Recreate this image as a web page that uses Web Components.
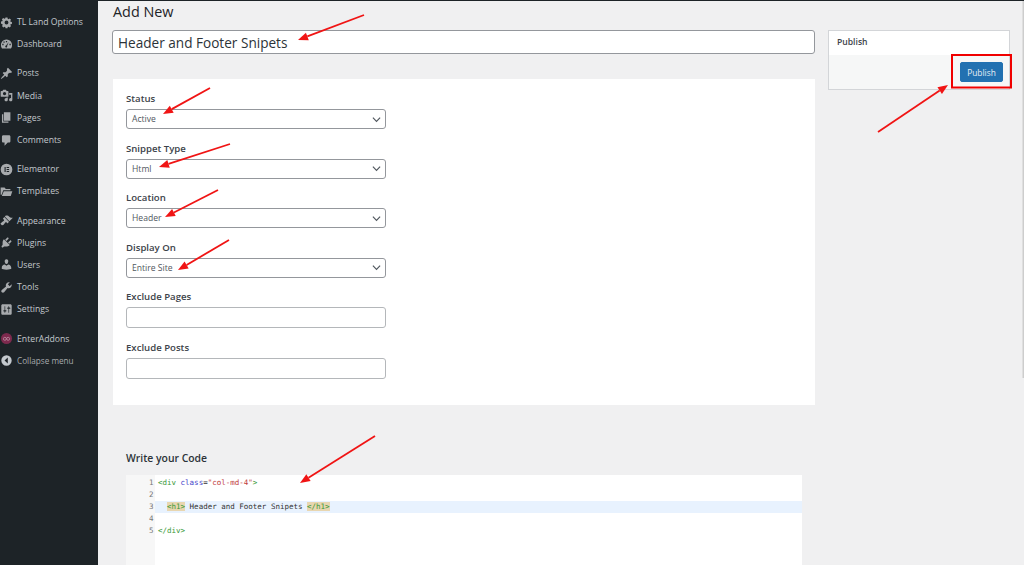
<!DOCTYPE html>
<html>
<head>
<meta charset="utf-8">
<title>Add New</title>
<style>
  html, body { margin: 0; height: 100%; overflow: hidden; }
  body { font-family: "Open Sans", "Noto Sans", sans-serif; background: #f0f0f1; }
</style>
</head>
<body>
<wp-admin>
  <admin-menu slot="menu">
    <menu-item icon="gear">TL Land Options</menu-item>
    <menu-item icon="gauge">Dashboard</menu-item>
    <menu-item icon="pin" class="gap">Posts</menu-item>
    <menu-item icon="media">Media</menu-item>
    <menu-item icon="pages">Pages</menu-item>
    <menu-item icon="comment">Comments</menu-item>
    <menu-item icon="elementor" class="gap">Elementor</menu-item>
    <menu-item icon="folder">Templates</menu-item>
    <menu-item icon="brush" class="gap">Appearance</menu-item>
    <menu-item icon="plug">Plugins</menu-item>
    <menu-item icon="user">Users</menu-item>
    <menu-item icon="wrench">Tools</menu-item>
    <menu-item icon="sliders">Settings</menu-item>
    <menu-item icon="addons" class="gap">EnterAddons</menu-item>
    <menu-item icon="collapse" class="dim">Collapse menu</menu-item>
  </admin-menu>

  <page-title>Add New</page-title>
  <title-input value="Header and Footer Snipets"></title-input>

  <form-card>
    <form-field label="Status" value="Active" type="select"></form-field>
    <form-field label="Snippet Type" value="Html" type="select"></form-field>
    <form-field label="Location" value="Header" type="select"></form-field>
    <form-field label="Display On" value="Entire Site" type="select"></form-field>
    <form-field label="Exclude Pages" type="text"></form-field>
    <form-field label="Exclude Posts" type="text"></form-field>
  </form-card>

  <code-editor heading="Write your Code"></code-editor>

  <publish-box slot="side"></publish-box>
  <red-arrows slot="overlay"></red-arrows>
</wp-admin>

<script>
// admin menu glyphs, 20x20 box
const ICONS = {
  gear: '<path fill-rule="evenodd" transform="translate(1.5 1.5) scale(.85)" d="M8.2 1h3.600l.4 2.400 1.500.6 2-1.400 2.500 2.500-1.400 2 .6 1.500 2.400.4v3.600l-2.400.4-.6 1.500 1.400 2-2.500 2.500-2-1.400-1.500.6-.4 2.400H8.200l-.4-2.400-1.500-.6-2 1.400-2.500-2.500 1.400-2-.6-1.500L0 11.800V8.200l2.400-.4.6-1.500-1.400-2 2.500-2.500 2 1.400 1.500-.6zM10 6.500a3.500 3.500 0 1 0 0 7 3.500 3.500 0 0 0 0-7z"/>',
  gauge: '<path fill-rule="evenodd" d="M10 2.500a8.500 8.500 0 0 0-7.400 12.700c.3.5.8.8 1.400.8h12c.6 0 1.100-.3 1.400-.8A8.500 8.500 0 0 0 10 2.500zM9 4.500h2v2H9zM4.800 6.300l1.400-1.400 1.400 1.400-1.400 1.400zM3.500 11v-2h2v2zm11 0v-2h2v2zM9 14.500a1.500 1.500 0 0 1 .3-2.900L13.500 6l-2.600 6.400A1.500 1.500 0 0 1 9 14.500z"/>',
  pin: '<path d="M10.440 3.020l1.820-1.820 6.360 6.350-1.830 1.820c-1.050-.68-2.480-.57-3.410.36l-.75.75c-.92.93-1.040 2.350-.35 3.410l-1.830 1.820-2.410-2.410-2.800 2.790c-.42.42-3.380 2.710-3.800 2.290s1.860-3.390 2.280-3.810l2.790-2.790L4.100 9.360l1.830-1.820c1.050.69 2.480.57 3.400-.36l.75-.75c.93-.92 1.050-2.350.36-3.410z"/>',
  media: '<path fill-rule="evenodd" d="M13 11V4c0-.55-.45-1-1-1h-1.670L9 1H5L3.670 3H2c-.55 0-1 .45-1 1v7c0 .55.45 1 1 1h10c.55 0 1-.45 1-1zM7 4.500c1.380 0 2.500 1.120 2.500 2.500S8.380 9.500 7 9.500 4.500 8.380 4.500 7 5.620 4.500 7 4.500zM14 6h5v10.500c0 1.380-1.120 2.500-2.500 2.500S14 17.880 14 16.500s1.120-2.500 2.500-2.500c.17 0 .34.02.5.05V9h-3V6zm-4 8.050V13h2v3.500c0 1.380-1.120 2.500-2.500 2.500S7 17.880 7 16.500 8.120 14 9.500 14c.17 0 .34.02.5.05z"/>',
  pages: '<path d="M6 15V2h10v13H6zm-1 1h8v2H3V5h2v11z"/>',
  comment: '<path d="M5 2h9c1.100 0 2 .9 2 2v7c0 1.100-.9 2-2 2h-2l-5 5v-5H5c-1.100 0-2-.9-2-2V4c0-1.100.9-2 2-2z"/>',
  elementor: '<path fill-rule="evenodd" d="M10 1a9 9 0 1 0 0 18 9 9 0 0 0 0-18zM7 6h1.700v8H7zm3.200 0H14v1.600h-3.800zm0 3.200H14v1.600h-3.800zm0 3.200H14V14h-3.800z"/>',
  folder: '<path d="M1 4h6l2 2h7v2H5L2.500 15 1 15zM5.800 9.500H19L16.500 17H2.800z"/>',
  brush: '<path d="M14.480 11.060L7.410 3.990l1.500-1.500c.5-.56 2.300-.47 3.510.32 1.210.8 1.430 1.280 2.910 2.100 1.180.64 2.450 1.260 4.450.85zm-.71.71L6.700 4.700 4.930 6.470c-.39.39-.39 1.020 0 1.410l1.060 1.060c.39.39.39 1.030 0 1.420-.6.6-1.430 1.110-2.210 1.690-.35.26-.7.53-1.010.84C1.430 13.230.4 14.750 1.010 15.500l.04.05 1.410 1.410c.91.91 2.490.08 3.450-.87.31-.31.58-.66.84-1.010.58-.78 1.090-1.610 1.690-2.210.39-.39 1.030-.39 1.420 0l1.060 1.060c.39.39 1.020.39 1.410 0z"/>',
  plug: '<path d="M13.110 4.360L9.870 7.600 8 5.730l3.240-3.240c.35-.34 1.050-.2 1.560.32.52.51.66 1.210.31 1.550zm-8 1.770l.91-1.120 9.010 9.010-1.190.84c-.71.71-2.630 1.160-3.820 1.160H6.140L4.900 17.260c-.59.59-1.540.59-2.120 0-.59-.58-.59-1.530 0-2.120l1.240-1.240v-3.880c0-1.130.4-3.190 1.090-3.890zm7.260 3.970l3.240-3.240c.34-.35 1.040-.21 1.550.31.52.51.66 1.210.31 1.550l-3.240 3.250z"/>',
  user: '<path d="M10 9.250c-2.270 0-2.730-3.440-2.730-3.440C7 4.020 7.820 2 9.970 2c2.160 0 2.980 2.020 2.710 3.810 0 0-.41 3.440-2.680 3.440zm0 2.570L12.720 10c2.390 0 4.520 2.330 4.520 4.530v2.490s-3.650 1.130-7.240 1.130c-3.650 0-7.240-1.130-7.240-1.130v-2.490c0-2.250 1.940-4.480 4.470-4.480z"/>',
  wrench: '<path fill-rule="evenodd" d="M16.680 9.770c-1.340 1.340-3.300 1.670-4.950.99l-5.410 6.520c-.99.99-2.590.99-3.580 0s-.99-2.590 0-3.570l6.520-5.420c-.68-1.650-.35-3.610.99-4.950 1.280-1.280 3.120-1.620 4.720-1.060l-2.890 2.890 2.820 2.820 2.860-2.870c.53 1.580.18 3.390-1.080 4.650z"/>',
  sliders: '<path fill-rule="evenodd" d="M18 16V4c0-1.100-.9-2-2-2H4c-1.100 0-2 .9-2 2v12c0 1.100.9 2 2 2h12c1.100 0 2-.9 2-2zM8 11h1c.55 0 1 .45 1 1s-.45 1-1 1H8v1.500c0 .28-.22.5-.5.5s-.5-.22-.5-.5V13H6c-.55 0-1-.45-1-1s.45-1 1-1h1V5.500c0-.28.22-.5.5-.5s.5.22.5.5V11zm5-2h-1c-.55 0-1-.45-1-1s.45-1 1-1h1V5.500c0-.28.22-.5.5-.5s.5.22.5.5V7h1c.55 0 1 .45 1 1s-.45 1-1 1h-1v5.500c0 .28-.22.5-.5.5s-.5-.22-.5-.5V9z"/>',
  collapse: '<path fill-rule="evenodd" d="M10 2a8 8 0 1 1 0 16 8 8 0 0 1 0-16zm2 3.500L7 10l5 4.500z"/>',
  addons: '<circle cx="10" cy="10" r="8.500" fill="#7d2a4e"/><circle cx="7.500" cy="10.500" r="2.300" fill="none" stroke="#c9a3b4"/><circle cx="12.500" cy="10.500" r="2.300" fill="none" stroke="#c9a3b4"/>'
};

class AdminMenu extends HTMLElement {
  constructor() {
    super();
    this.attachShadow({ mode: 'open' }).innerHTML = `
      <style>
        :host {
          display: flex;
          flex-direction: column;
          flex: none;
          width: 98px;
          height: 100%;
          padding-top: 11px;
          box-sizing: border-box;
          background: #1d2327;
        }
      </style>
      <slot></slot>
    `;
  }
}

class MenuItem extends HTMLElement {
  constructor() {
    super();
    this.attachShadow({ mode: 'open' }).innerHTML = `
      <style>
        :host {
          display: flex;
          align-items: center;
          height: 22.2px;
          flex: none;
          font-size: 8.7px;
          color: #c3c8cd;
          white-space: nowrap;
        }
        :host(.gap) { margin-top: 7px; }
        :host(.dim) { color: #a7aaad; font-size: 8.2px; }
        svg { width: 13px; height: 13px; margin-right: 4px; fill: #a7aaad; flex: none; }
        :host(.dim) svg { fill: #c3c8cd; }
      </style>
      <svg viewBox="0 0 20 20">${ICONS[this.getAttribute('icon')]}</svg><slot></slot>
    `;
  }
}

class PageTitle extends HTMLElement {
  constructor() {
    super();
    this.attachShadow({ mode: 'open' }).innerHTML = `
      <style>
        :host {
          display: block;
          height: 29px;
          padding-left: 1px;
          font-size: 14.4px;
          line-height: 21px;
          color: #1d2327;
        }
      </style>
      <slot></slot>
    `;
  }
}

class TitleInput extends HTMLElement {
  constructor() {
    super();
    this.attachShadow({ mode: 'open' }).innerHTML = `
      <style>
        :host {
          display: block;
          height: 24px;
          box-sizing: border-box;
          margin-bottom: 25px;
          padding-left: 5px;
          background: #fff;
          border: 1px solid #94979c;
          border-radius: 3px;
          font-size: 13.6px;
          line-height: 23px;
          color: #2c3338;
        }
      </style>
      ${this.getAttribute('value')}
    `;
  }
}

class FormCard extends HTMLElement {
  constructor() {
    super();
    this.attachShadow({ mode: 'open' }).innerHTML = `
      <style>
        :host {
          display: block;
          height: 326px;
          box-sizing: border-box;
          margin-left: 1px;
          padding: 13px 13px 0;
          background: #fff;
        }
      </style>
      <slot></slot>
    `;
  }
}

class FormField extends HTMLElement {
  constructor() {
    super();
    const isSelect = this.getAttribute('type') === 'select';
    const value = this.getAttribute('value') || '';
    this.attachShadow({ mode: 'open' }).innerHTML = `
      <style>
        :host { display: block; width: 260px; height: ${isSelect ? '49.5px' : '50.5px'}; }
        label {
          display: block;
          height: 17px;
          font-size: 9.6px;
          font-weight: 600;
          line-height: 13px;
          color: #3c434a;
        }
        .box {
          display: flex;
          align-items: center;
          justify-content: space-between;
          height: ${isSelect ? '20px' : '21px'};
          box-sizing: border-box;
          padding: 0 4px 0 5px;
          border: 1px solid ${isSelect ? '#94979c' : '#b4b7ba'};
          border-radius: 3px;
          background: #fff;
          font-size: 8.6px;
          color: #50575e;
        }
        svg { width: 9px; height: 9px; fill: none; stroke: #50575e; stroke-width: 1.3; }
      </style>
      <label>${this.getAttribute('label')}</label>
      <div class="box">
        <span>${value}</span>
        ${isSelect ? '<svg viewBox="0 0 10 10"><path d="M1 3l4 4 4-4"/></svg>' : ''}
      </div>
    `;
  }
}

class CodeEditor extends HTMLElement {
  constructor() {
    super();
    this.attachShadow({ mode: 'open' }).innerHTML = `
      <style>
        :host { display: block; margin: 46px 13px 0 14px; }
        h2 {
          margin: 0 0 9px;
          height: 15px;
          font-size: 10.4px;
          font-weight: 600;
          line-height: 15px;
          color: #2c3338;
        }
        .editor {
          display: grid;
          grid-template-columns: 29px 1fr;
          grid-auto-rows: 12px;
          height: 120px;
          padding-top: 2px;
          background: linear-gradient(90deg, #f7f7f7 29px, #fff 29px);
          font-family: "DejaVu Sans Mono", monospace;
          font-size: 7.5px;
          line-height: 12px;
        }
        .num { padding-right: 1.5px; text-align: right; color: #777; }
        .line { padding-left: 3px; white-space: pre; color: #333; }
        .active { background: #e8f2fe; }
        .tag { color: #3a9a3a; }
        .attr { color: #3d3dc8; }
        .str { color: #c03a3a; }
        .match { background: #e8d6b0; color: #3a9a3a; }
      </style>
      <h2>${this.getAttribute('heading')}</h2>
      <div class="editor">
        <div class="num">1</div><div class="line"><span class="tag">&lt;div</span> <span class="attr">class</span>=<span class="str">"col-md-4"</span><span class="tag">&gt;</span></div>
        <div class="num">2</div><div class="line"></div>
        <div class="num">3</div><div class="line active">  <span class="match">&lt;h1&gt;</span> Header and Footer Snipets <span class="match">&lt;/h1&gt;</span></div>
        <div class="num">4</div><div class="line"></div>
        <div class="num">5</div><div class="line"><span class="tag">&lt;/div&gt;</span></div>
      </div>
    `;
  }
}

class PublishBox extends HTMLElement {
  constructor() {
    super();
    this.attachShadow({ mode: 'open' }).innerHTML = `
      <style>
        :host {
          display: block;
          width: 182px;
          height: 60px;
          box-sizing: border-box;
          border: 1px solid #d3d5d8;
          background: #fff;
        }
        header {
          height: 24px;
          box-sizing: border-box;
          padding-left: 8px;
          font-size: 8.6px;
          font-weight: 600;
          line-height: 23px;
          color: #3c434a;
        }
        footer {
          display: flex;
          justify-content: flex-end;
          height: 34px;
          padding: 7px 6px 0 0;
          box-sizing: border-box;
          background: #f6f7f7;
        }
        button {
          width: 43px;
          height: 20px;
          padding: 0;
          border: 1px solid #2271b1;
          border-radius: 2px;
          background: #2271b1;
          font: inherit;
          font-size: 8.4px;
          color: #e6eef5;
        }
      </style>
      <header>Publish</header>
      <footer><button>Publish</button></footer>
    `;
  }
}

class RedArrows extends HTMLElement {
  constructor() {
    super();
    const lines = [
      [364, 15, 298, 40], [210, 88, 163, 114], [230, 144, 159, 167], [218, 190, 165, 217],
      [229, 240, 178, 270], [375, 436, 300, 483], [878, 132, 948, 85]
    ];
    const shapes = lines.map(([x1, y1, x2, y2]) => {
      const a = Math.atan2(y2 - y1, x2 - x1);
      const len = 10, half = 4;
      const bx = x2 - Math.cos(a) * len, by = y2 - Math.sin(a) * len;
      const nx = -Math.sin(a) * half, ny = Math.cos(a) * half;
      return `<line x1="${x1}" y1="${y1}" x2="${bx}" y2="${by}"/>` +
        `<polygon points="${x2},${y2} ${bx + nx},${by + ny} ${bx - nx},${by - ny}"/>`;
    }).join('');
    this.attachShadow({ mode: 'open' }).innerHTML = `
      <style>
        :host { position: absolute; inset: 0; pointer-events: none; }
        svg { width: 100%; height: 100%; display: block; }
        line { stroke: #f01414; stroke-width: 1.8; }
        polygon { fill: #f01414; }
        .mark { fill: none; stroke: #f00000; stroke-width: 2; }
        .thumb { fill: #cdcdcd; }
      </style>
      <svg viewBox="0 0 1024 565">
        ${shapes}
        <rect class="mark" x="952" y="55" width="59" height="32.5"/>
        <rect class="thumb" x="1022.5" y="1" width="1.5" height="377"/>
      </svg>
    `;
  }
}

class WpAdmin extends HTMLElement {
  constructor() {
    super();
    this.attachShadow({ mode: 'open' }).innerHTML = `
      <style>
        :host {
          display: flex;
          position: relative;
          width: 1024px;
          height: 565px;
          overflow: hidden;
        }
        :host::before {
          content: "";
          position: absolute;
          inset: 0 0 auto 0;
          height: 1px;
          background: #1d2327;
        }
        .main { flex: none; width: 703px; margin: 1px 0 0 14px; }
        .side { flex: none; margin: 30px 0 0 13px; }
      </style>
      <slot name="menu"></slot>
      <div class="main"><slot></slot></div>
      <div class="side"><slot name="side"></slot></div>
      <slot name="overlay"></slot>
    `;
  }
}

customElements.define('admin-menu', AdminMenu);
customElements.define('menu-item', MenuItem);
customElements.define('page-title', PageTitle);
customElements.define('title-input', TitleInput);
customElements.define('form-card', FormCard);
customElements.define('form-field', FormField);
customElements.define('code-editor', CodeEditor);
customElements.define('publish-box', PublishBox);
customElements.define('red-arrows', RedArrows);
customElements.define('wp-admin', WpAdmin);
</script>
</body>
</html>
